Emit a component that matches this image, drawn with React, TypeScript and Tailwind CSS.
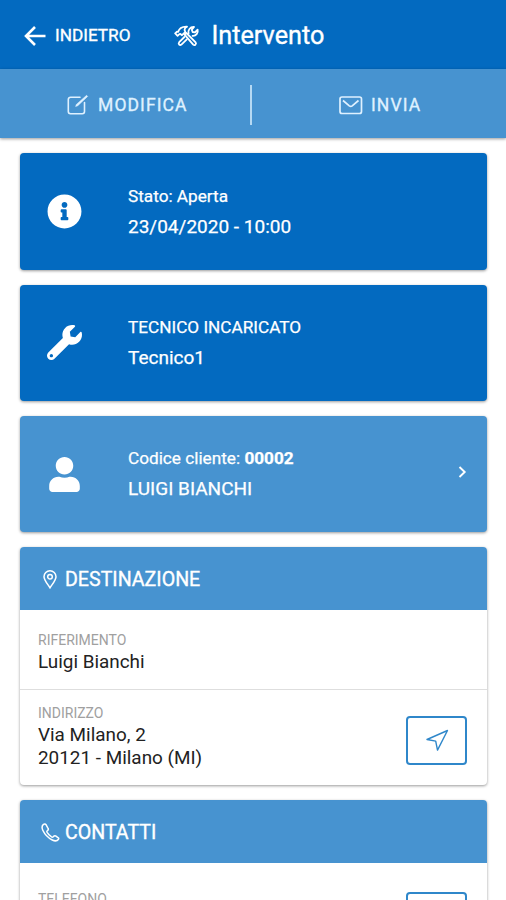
// Intervention detail screen
// Shows status, technician, customer, destination and contacts

import React from 'react';
import { FaInfoCircle, FaWrench, FaUser } from 'react-icons/fa';

interface IconProps {
  className?: string;
}

const ArrowLeftIcon: React.FC<IconProps> = ({ className }) => (
  <svg viewBox="0 0 22 20" className={className} fill="none" stroke="currentColor" strokeWidth="2.6">
    <path d="M21.5 10H2.5M11 1 2 10l9 9" />
  </svg>
);

const ToolsIcon: React.FC<IconProps> = ({ className }) => (
  <svg
    viewBox="0 0 26 22"
    className={className}
    fill="none"
    stroke="currentColor"
    strokeWidth="1.8"
    strokeLinejoin="round"
    strokeLinecap="round"
  >
    {/* hammer */}
    <path d="M1.2 8.4 3 6.6l1.2.3C5 3.6 8 1.4 13 1.6c-1.8.8-2.6 1.8-2.4 3.6L11.4 7 8 10.2 6.4 9l-1 .2-1.8 1.6z" />
    <path d="m10.6 9.6 1.8-1.6 9.2 9.4c1.2 1.4-.8 3.6-2.4 2.2z" />
    {/* wrench */}
    <path d="M14.6 8.6c-1-3.4 1.4-6.8 5.4-6.6l-2.2 2.8.8 2.2 2.4.4L23.6 4.6c1 3.6-1.8 6.6-5 6.2M10.4 12l-5.2 5.2c-1.4 1.8.6 3.6 2.2 2.4l5.4-5.2" />
  </svg>
);

const EditIcon: React.FC<IconProps> = ({ className }) => (
  <svg viewBox="0 0 22 22" className={className} fill="none" stroke="currentColor" strokeWidth="1.6">
    <path d="M13 3.2H3.5a2.2 2.2 0 0 0-2.2 2.2v12.1a2.2 2.2 0 0 0 2.2 2.2h11.8a2.2 2.2 0 0 0 2.2-2.2V8.5" strokeLinecap="round" />
    <path d="m8.6 12.5.7-2L19.6 1.300l1.100 1.100-9.900 9.300z" fill="currentColor" strokeWidth=".5" />
  </svg>
);

const MailIcon: React.FC<IconProps> = ({ className }) => (
  <svg viewBox="0 0 24 19" className={className} fill="none" stroke="currentColor" strokeWidth="1.7">
    <rect x="1" y="1" width="21.5" height="16.5" rx="2" />
    <path d="m4 4.500 6.300 5.300c.9.700 2 .700 2.900 0l6.300-5.300" />
  </svg>
);

const PinIcon: React.FC<IconProps> = ({ className }) => (
  <svg viewBox="0 0 14 19" className={className} fill="none" stroke="currentColor" strokeWidth="1.5">
    <path d="M7 17.8C5 14.500 1 10.200 1 6.700a6 5.900 0 0 1 12 0c0 3.500-4 7.800-6 11.100z" />
    <circle cx="7" cy="6.7" r="2.3" />
  </svg>
);

const PhoneIcon: React.FC<IconProps> = ({ className }) => (
  <svg viewBox="0 0 19 19" className={className} fill="none" stroke="currentColor" strokeWidth="1.5" strokeLinejoin="round">
    <path d="M2.500 1.400c-1.800 1.500-1.800 3.500-.7 5.900 2 4.300 5.200 7.600 9.500 9.700 2.600 1.300 4.800 1.200 6.200-.8.400-.6.300-1-.2-1.400l-2.700-1.900c-.7-.4-1.200-.3-1.700.2l-.9.9c-.5.400-1 .2-1.500-.1a15 15 0 0 1-4.400-4.500c-.3-.5-.4-1 0-1.400l.9-.9c.4-.5.5-1 .1-1.600L5 1.700c-.600-.9-1.600-1-2.500-.3z" />
  </svg>
);

const NavigateIcon: React.FC<IconProps> = ({ className }) => (
  <svg viewBox="0 0 24 23" className={className} fill="none" stroke="currentColor" strokeWidth="1.4" strokeLinejoin="round">
    <path d="M22.500 1.500 2 10.500l8.700 1.600 1.800 9z" />
  </svg>
);

const ChevronIcon: React.FC<IconProps> = ({ className }) => (
  <svg viewBox="0 0 9 14" className={className} fill="none" stroke="currentColor" strokeWidth="1.9">
    <path d="M1.500 2 6.700 7l-5.200 5" />
  </svg>
);

interface InfoCardProps {
  icon: React.ReactNode;
  title: React.ReactNode;
  value: string;
  light?: boolean;
  chevron?: boolean;
}

const InfoCard: React.FC<InfoCardProps> = ({ icon, title, value, light = false, chevron = false }) => (
  <div
    className={`flex h-[116.3px] items-center rounded-[4px] text-white shadow-[0_1px_3px_rgba(0,0,0,0.4)] ${
      light ? 'bg-[#4793d0]' : 'bg-[#036ac0]'
    }`}
  >
    <div className="flex w-[88px] shrink-0 justify-center">{icon}</div>
    <div className="ml-5 flex-1 pb-px">
      <p className="text-[17.2px] leading-[30px] [-webkit-text-stroke:0.25px]">{title}</p>
      <p className="text-[19px] leading-[31px] [-webkit-text-stroke:0.25px]">{value}</p>
    </div>
    {chevron && <ChevronIcon className="mr-5 mb-1 h-[14px] w-[9px]" />}
  </div>
);

interface SectionProps {
  icon: React.ReactNode;
  title: string;
  children: React.ReactNode;
}

const Section: React.FC<SectionProps> = ({ icon, title, children }) => (
  <section className="rounded-[4px] bg-white shadow-[0_1px_3px_rgba(0,0,0,0.4)]">
    <h2 className="flex h-[63px] items-center rounded-t-[4px] bg-[#4793d0] pt-px pl-5 text-[19.6px] font-normal text-white [-webkit-text-stroke:0.35px]">
      <span className="mr-[5px] flex w-5 justify-center">{icon}</span>
      <span className="pt-px">{title}</span>
    </h2>
    {children}
  </section>
);

const NavigateButton: React.FC<{ children?: React.ReactNode }> = ({ children }) => (
  <button className="flex h-[49px] w-[61px] items-center justify-center rounded-[4px] border-2 border-[#2f87ca] text-[#2f87ca]">
    {children}
  </button>
);

export default function App() {
  return (
    <div className="h-[900px] w-[506px] overflow-hidden bg-white font-[Roboto,sans-serif]">
      <header className="flex h-[69px] items-center bg-[#036ac0] pt-0.5 text-white">
        <ArrowLeftIcon className="ml-6 h-5 w-[22px]" />
        <span className="ml-[9px] w-[119px] text-[17.2px] [-webkit-text-stroke:0.35px]">INDIETRO</span>
        <ToolsIcon className="h-[22px] w-[26px]" />
        <h1 className="ml-[11.5px] pt-px text-[25.2px] font-normal [-webkit-text-stroke:0.35px]">Intervento</h1>
      </header>

      <nav className="flex h-[69px] items-center bg-[#4793d0] pt-0.5 text-[17.5px] tracking-[1.1px] text-[#dff1ff] shadow-[0_1px_3px_rgba(0,0,0,0.4)] [-webkit-text-stroke:0.35px]">
        <a className="flex h-10 w-[252px] items-center border-r-2 border-[#b5d9f3] pt-px pl-[67px]">
          <EditIcon className="mr-[9px] h-[22px] w-[22px]" />
          MODIFICA
        </a>
        <a className="flex items-center pt-px pl-[87px]">
          <MailIcon className="mr-[8px] h-[19px] w-6" />
          INVIA
        </a>
      </nav>

      <main className="flex flex-col gap-[15px] pt-[15.4px] pr-[19px] pl-5">
        <InfoCard icon={<FaInfoCircle size={35} />} title="Stato: Aperta" value="23/04/2020 - 10:00" />
        <InfoCard icon={<FaWrench size={35} />} title="TECNICO INCARICATO" value="Tecnico1" />
        <InfoCard
          icon={<FaUser size={35} />}
          title={
            <>
              Codice cliente: <b className="font-bold">00002</b>
            </>
          }
          value="LUIGI BIANCHI"
          light
          chevron
        />

        <Section icon={<PinIcon className="h-[19px] w-[14px]" />} title="DESTINAZIONE">
          <div className="border-b border-[#dedede] pt-[21px] pb-4 pl-[18px]">
            <p className="text-[14px] leading-[18px] text-[#a0a0a0]">RIFERIMENTO</p>
            <p className="pt-px text-[18.9px] leading-[23px] text-[#222]">Luigi Bianchi</p>
          </div>
          <div className="flex items-end justify-between pt-[14px] pr-5 pb-4 pl-[18px]">
            <div>
              <p className="text-[14px] leading-[18px] text-[#a0a0a0]">INDIRIZZO</p>
              <p className="pt-px text-[18.9px] leading-[23px] text-[#222]">Via Milano, 2</p>
              <p className="text-[18.9px] leading-[23px] text-[#222]">20121 - Milano (MI)</p>
            </div>
            <div className="pb-1">
              <NavigateButton>
                <NavigateIcon className="h-[23px] w-6" />
              </NavigateButton>
            </div>
          </div>
        </Section>

        <Section icon={<PhoneIcon className="h-[19px] w-[19px]" />} title="CONTATTI">
          <div className="flex items-start justify-between pt-[26.500px] pr-5 pb-5 pl-[18px]">
            <div>
              <p className="text-[14px] leading-[18px] text-[#a0a0a0]">TELEFONO</p>
            </div>
            <div className="pt-0.5">
              <NavigateButton />
            </div>
          </div>
        </Section>
      </main>
    </div>
  );
}
